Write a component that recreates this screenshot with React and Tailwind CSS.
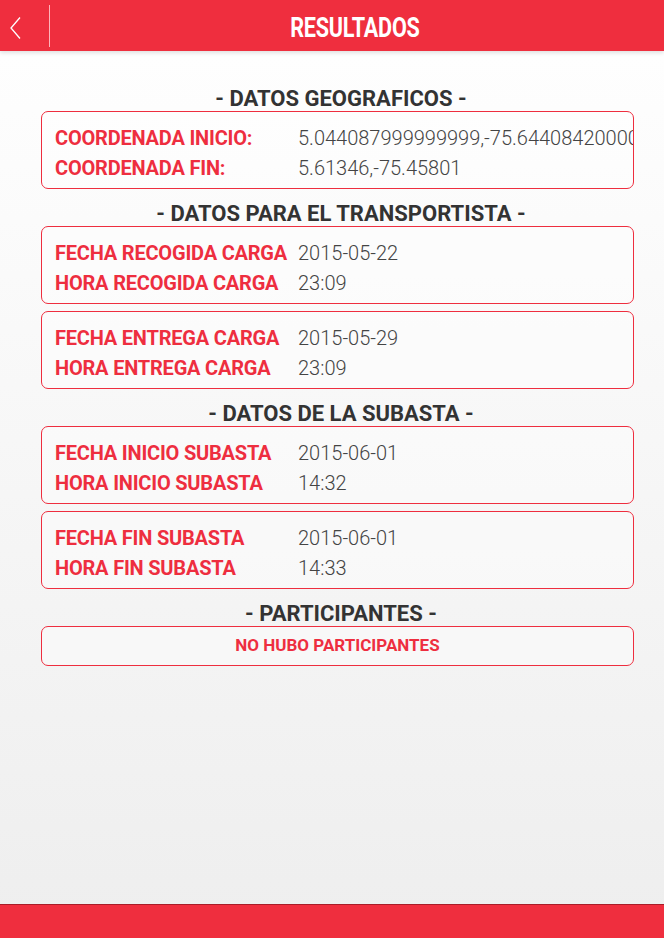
import React from "react";

const Row = ({ label, value }) => (
  <div className="grid grid-cols-[243px_1fr] h-[30px] items-center whitespace-nowrap">
    <div className="text-[20px] font-bold text-[#ee2e3f] tracking-[-0.2px]">{label}</div>
    <div className="text-[20px] font-light text-[#444]">{value}</div>
  </div>
);

const Card = ({ rows }) => (
  <div className="h-[78px] border border-[#ee2e3f] rounded-[7px] pl-[13px] pt-[11px] overflow-hidden bg-white/40">
    {rows.map((r) => (
      <Row key={r[0]} label={r[0]} value={r[1]} />
    ))}
  </div>
);

const Heading = ({ children, className = "" }) => (
  <div className={"h-[26px] flex items-center justify-center pl-[7px] pt-[2px] text-[22px] font-bold text-[#333] leading-none " + className}>
    {children}
  </div>
);

export default function App() {
  return (
    <div
      className="h-[938px] flex flex-col bg-gradient-to-b from-white to-[#eeeeee] overflow-hidden"
      style={{ fontFamily: "Roboto, 'Liberation Sans', sans-serif" }}
    >
      <header className="h-[51px] bg-[#ef2e3e] flex items-center relative shadow-[0_2px_4px_rgba(0,0,0,0.12)] z-10 shrink-0">
        <div className="w-[49px] h-full flex items-center justify-start pl-[9px] pt-[4px]">
          <svg width="12" height="24" viewBox="0 0 12 24" fill="none">
            <path d="M11 1.5 L2 12 L11 22.5" stroke="white" strokeWidth="1.3" />
          </svg>
        </div>
        <div className="w-px h-[42px] bg-[#ffb3b9]" />
        <div className="flex-1 flex justify-center pr-[5px] pt-[5px]">
          <span className="text-[27px] font-bold text-white scale-x-[0.8] inline-block tracking-[-0.3px] leading-none">
            RESULTADOS
          </span>
        </div>
      </header>

      <main className="flex-1 pl-[41px] pr-[30px] pt-[34px]">
        <Heading>- DATOS GEOGRAFICOS -</Heading>
        <Card
          rows={[
            ["COORDENADA INICIO:", "5.044087999999999,-75.64408420000001"],
            ["COORDENADA FIN:", "5.61346,-75.45801"],
          ]}
        />
        <Heading className="mt-[11px]">- DATOS PARA EL TRANSPORTISTA -</Heading>
        <div className="flex flex-col gap-[7px]">
          <Card
            rows={[
              ["FECHA RECOGIDA CARGA", "2015-05-22"],
              ["HORA RECOGIDA CARGA", "23:09"],
            ]}
          />
          <Card
            rows={[
              ["FECHA ENTREGA CARGA", "2015-05-29"],
              ["HORA ENTREGA CARGA", "23:09"],
            ]}
          />
        </div>
        <Heading className="mt-[11px]">- DATOS DE LA SUBASTA -</Heading>
        <div className="flex flex-col gap-[7px]">
          <Card
            rows={[
              ["FECHA INICIO SUBASTA", "2015-06-01"],
              ["HORA INICIO SUBASTA", "14:32"],
            ]}
          />
          <Card
            rows={[
              ["FECHA FIN SUBASTA", "2015-06-01"],
              ["HORA FIN SUBASTA", "14:33"],
            ]}
          />
        </div>
        <Heading className="mt-[11px]">- PARTICIPANTES -</Heading>
        <div className="h-[40px] border border-[#ee2e3f] rounded-[7px] flex items-center justify-center bg-white/40">
          <span className="text-[17px] font-bold text-[#ee2e3f]">NO HUBO PARTICIPANTES</span>
        </div>
      </main>

      <footer className="h-[34px] shrink-0 bg-[#ef2e3e] border-t border-[#a81d28]" />
    </div>
  );
}
